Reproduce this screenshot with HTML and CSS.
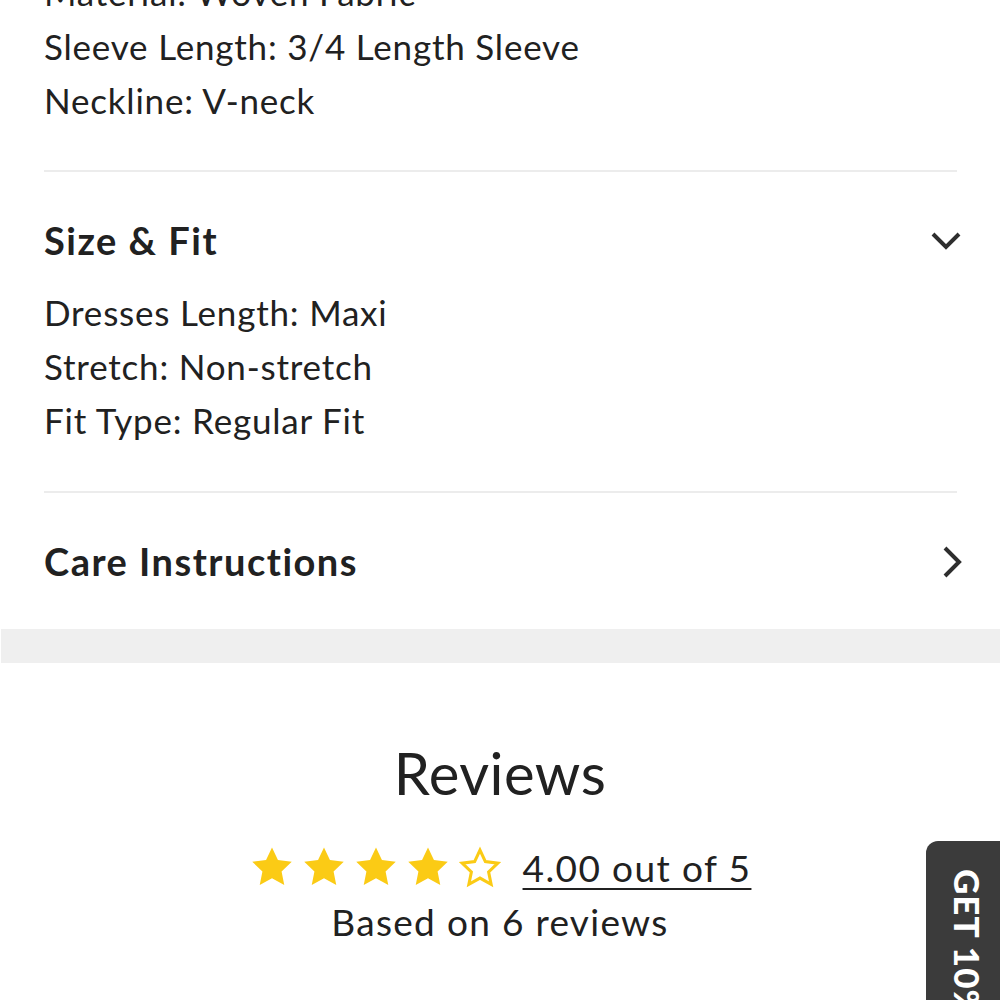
FILE: index.html
```html
<!DOCTYPE html>
<html lang="en">
<head>
<meta charset="utf-8">
<title>Product details</title>
<link rel="stylesheet" href="styles.css">
</head>
<body>
<main class="page">
  <section class="specs">
    <p>Material: Woven Fabric</p>
    <p>Sleeve Length: 3/4 Length Sleeve</p>
    <p>Neckline: V-neck</p>
  </section>

  <section class="acc open">
    <div class="acc-head">
      <h2>Size &amp; Fit</h2>
      <svg class="chev" width="32" height="32" viewBox="0 0 32 32"><polyline points="3,9 16,22 29,9" fill="none" stroke="#2e2e2e" stroke-width="4"/></svg>
    </div>
    <div class="acc-body">
      <p>Dresses Length: Maxi</p>
      <p>Stretch: Non-stretch</p>
      <p>Fit Type: Regular Fit</p>
    </div>
  </section>

  <section class="acc closed">
    <div class="acc-head">
      <h2>Care Instructions</h2>
      <svg class="chev" width="32" height="32" viewBox="0 0 32 32"><polyline points="15,2 29,16 15,30" fill="none" stroke="#2e2e2e" stroke-width="4"/></svg>
    </div>
  </section>
</main>

<div class="band"></div>

<section class="reviews">
  <h2>Reviews</h2>
  <div class="rating">
    <span class="stars">
      <svg viewBox="0 0 24 24" width="46" height="46"><path class="full" d="M12 1.8l3.1 6.6 7.2.9-5.3 5 1.4 7.1L12 17.9l-6.4 3.5 1.4-7.1-5.3-5 7.2-.9z"/></svg>
      <svg viewBox="0 0 24 24" width="46" height="46"><path class="full" d="M12 1.8l3.1 6.6 7.2.9-5.3 5 1.4 7.1L12 17.9l-6.4 3.5 1.4-7.1-5.3-5 7.2-.9z"/></svg>
      <svg viewBox="0 0 24 24" width="46" height="46"><path class="full" d="M12 1.8l3.1 6.6 7.2.9-5.3 5 1.4 7.1L12 17.9l-6.4 3.5 1.4-7.1-5.3-5 7.2-.9z"/></svg>
      <svg viewBox="0 0 24 24" width="46" height="46"><path class="full" d="M12 1.8l3.1 6.6 7.2.9-5.3 5 1.4 7.1L12 17.9l-6.4 3.5 1.4-7.1-5.3-5 7.2-.9z"/></svg>
      <svg viewBox="0 0 24 24" width="46" height="46"><path class="empty" d="M12 3.2l2.8 6 6.5.8-4.8 4.6 1.3 6.4L12 17.8l-5.8 3.2 1.3-6.4L2.7 10l6.5-.8z"/></svg>
    </span>
    <a class="score" href="#">4.00 out of 5</a>
  </div>
  <p class="based">Based on 6 reviews</p>
</section>

<div class="teaser"><span>GET 10% OFF</span></div>
</body>
</html>
```

FILE: styles.css
```css
* { box-sizing: border-box; }
html, body { margin: 0; padding: 0; background: #fff; overflow: hidden; }
body {
  font-family: Lato, "Noto Sans", sans-serif;
  color: #212121;
  height: 1000px;
}
p, h2 { margin: 0; }

.page { padding: 0 43px 0 44px; }

.specs { margin-top: -35px; padding-bottom: 43px; }
.specs p, .acc-body p {
  font-size: 35px;
  line-height: 54px;
  letter-spacing: 0.8px;
}

.acc { border-top: 2px solid #ececec; }
.acc-head {
  display: flex;
  align-items: center;
  justify-content: space-between;
  height: 70px;
  margin-top: 33px;
}
.acc-head h2 { font-size: 38px; font-weight: 700; line-height: 70px; letter-spacing: 1.5px; }
.chev { margin-right: -5px; margin-top: 2px; flex: none; }
.open .acc-body { margin-top: 10px; padding-bottom: 44px; }
.closed { padding-bottom: 33px; }

.band { height: 34px; background: #efefef; margin-left: 1px; }

.reviews { text-align: center; padding-top: 75px; }
.reviews h2 { font-size: 58px; font-weight: 400; line-height: 70px; letter-spacing: 0.5px; }
.rating {
  margin-top: 33px;
  height: 54px;
  display: flex;
  align-items: center;
  justify-content: center;
  gap: 20px;
}
.stars { display: flex; gap: 6px; margin-top: -2px; }
.stars svg { display: block; }
.stars .full { fill: #fbcb15; }
.stars .empty { fill: none; stroke: #fbcb15; stroke-width: 1.6; stroke-linejoin: miter; }
.score {
  color: #212121;
  font-size: 37px;
  line-height: 54px;
  text-decoration: underline;
  text-decoration-thickness: 2px;
  text-underline-offset: 6px;
  letter-spacing: 1.4px;
}
.based { font-size: 37px; line-height: 54px; letter-spacing: 1.3px; }

.teaser {
  position: absolute;
  left: 926px;
  top: 841px;
  width: 90px;
  height: 300px;
  background: #3b3b3b;
  border-radius: 12px 0 0 0;
  padding: 28px 0 0 21px;
}
.teaser span {
  writing-mode: vertical-rl;
  color: #fff;
  font-weight: 900;
  font-size: 35px;
  letter-spacing: 1px;
}
```
